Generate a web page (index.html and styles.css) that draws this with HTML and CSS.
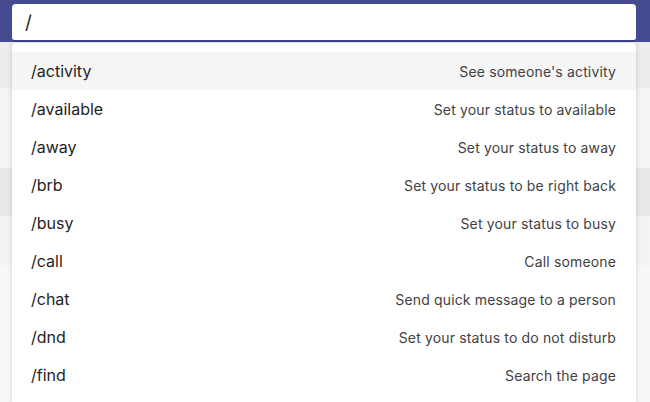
FILE: index.html
```html
<!DOCTYPE html>
<html>
<head>
<meta charset="utf-8">
<link rel="stylesheet" href="styles.css">
</head>
<body>
<div class="app">
  <header class="topbar"></header>
  <main class="page">
    <div class="stripe s1"></div>
    <div class="stripe s2"></div>
    <div class="stripe s3"></div>
    <div class="stripe s4"></div>
    <div class="stripe s5"></div>
  </main>
  <div class="search">
    <span class="query">/</span>
  </div>
  <ul class="menu">
    <li class="item active"><span class="cmd">/activity</span><span class="desc">See someone's activity</span></li>
    <li class="item"><span class="cmd">/available</span><span class="desc">Set your status to available</span></li>
    <li class="item"><span class="cmd">/away</span><span class="desc">Set your status to away</span></li>
    <li class="item"><span class="cmd">/brb</span><span class="desc">Set your status to be right back</span></li>
    <li class="item"><span class="cmd">/busy</span><span class="desc">Set your status to busy</span></li>
    <li class="item"><span class="cmd">/call</span><span class="desc">Call someone</span></li>
    <li class="item"><span class="cmd">/chat</span><span class="desc">Send quick message to a person</span></li>
    <li class="item"><span class="cmd">/dnd</span><span class="desc">Set your status to do not disturb</span></li>
    <li class="item"><span class="cmd">/find</span><span class="desc">Search the page</span></li>
  </ul>
</div>
</body>
</html>
```
FILE: styles.css
```css
* { box-sizing: border-box; }
html, body { margin: 0; padding: 0; }
body {
  width: 650px;
  height: 402px;
  overflow: hidden;
  font-family: Inter, "Noto Sans", "Liberation Sans", sans-serif;
  background: #f5f5f5;
}
.app {
  position: relative;
  width: 650px;
  height: 402px;
  overflow: hidden;
  display: flex;
  flex-direction: column;
}
.topbar {
  height: 42px;
  background: #464a8e;
  flex: none;
}
.page {
  flex: 1;
  display: flex;
  flex-direction: column;
  background: #f7f7f7;
}
.stripe { flex: none; }
.s1 { height: 46px; background: #ececec; }
.s2 { height: 80px; background: #f5f5f5; }
.s3 { height: 48px; background: #e9e9e9; }
.s4 { height: 50px; background: #f4f4f4; }
.s5 { flex: 1; background: #f8f8f8; }

.search {
  position: absolute;
  top: 4px;
  left: 12px;
  width: 624px;
  height: 38px;
  background: #ffffff;
  border-radius: 4px;
  border-bottom: 2px solid #3f4287;
  padding: 0 13px;
  display: flex;
  align-items: center;
}
.query {
  font-size: 19px;
  color: #1f1f1f;
  line-height: 1;
}
.menu {
  position: absolute;
  top: 43px;
  left: 12px;
  width: 624px;
  bottom: 0;
  margin: 0;
  padding: 9px 0 0;
  overflow: hidden;
  list-style: none;
  background: #ffffff;
  border-radius: 4px 4px 0 0;
  box-shadow: 0 2px 6px rgba(0,0,0,0.12), 0 0 2px rgba(0,0,0,0.08);
}
.item {
  height: 38px;
  display: flex;
  align-items: center;
  justify-content: space-between;
  padding: 0 20px 0 19px;
}
.item.active { background: #f5f5f5; }
.cmd {
  font-size: 16px;
  color: #242424;
}
.desc {
  font-size: 14px;
  letter-spacing: 0.15px;
  color: #424242;
}
```
